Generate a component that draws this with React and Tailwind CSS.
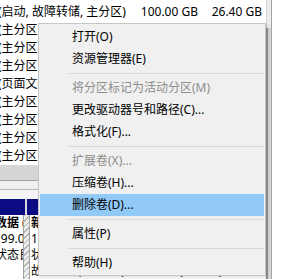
const menuItems = [
  { label: "打开(O)" },
  { label: "资源管理器(E)" },
  { sep: true },
  { label: "将分区标记为活动分区(M)", disabled: true },
  { label: "更改驱动器号和路径(C)..." },
  { label: "格式化(F)..." },
  { sep: true },
  { label: "扩展卷(X)...", disabled: true },
  { label: "压缩卷(H)..." },
  { label: "删除卷(D)...", active: true },
  { sep: true },
  { label: "属性(P)" },
  { sep: true },
  { label: "帮助(H)" },
];

const listRows = [
  "(主分区)",
  "(主分区)",
  "(主分区)",
  "(页面文件, 主分区)",
  "(主分区)",
  "(主分区)",
  "(主分区)",
  "(主分区)",
];

function ContextMenu() {
  return (
    <div className="absolute left-[38px] top-[23px] w-[228px] bg-[#f0f0f0] border border-[#c6c6c6] px-px pt-[2px] pb-px shadow-[2px_2px_3px_rgba(0,0,0,0.12)]">
      {menuItems.map((item, i) =>
        item.sep ? (
          <div key={i} className="h-[7px] flex items-center pl-[28px]">
            <div className="h-px flex-1 bg-[#d7d7d7]" />
          </div>
        ) : (
          <div
            key={i}
            className={`h-[22px] flex items-center pl-[32px] whitespace-nowrap ${
              item.active ? "bg-[#91c9f7]" : ""
            } ${item.disabled ? "text-[#8d8d8d]" : "text-black"}`}
          >
            {item.label}
          </div>
        )
      )}
    </div>
  );
}

export default function App() {
  return (
    <div className="relative w-[306px] h-[279px] overflow-hidden bg-white text-[12px] text-black font-['Noto_Sans','Noto_Sans_CJK_SC',sans-serif]">
      <div className="flex h-full">
        {/* volume list + disk map */}
        <div className="w-[266px] flex flex-col overflow-hidden">
          <div className="h-[171px] pt-[3px] bg-white">
            <div className="h-[18px] leading-[18px] flex whitespace-nowrap">
              <span className="-ml-[2px] w-[140px] shrink-0">(启动, 故障转储, 主分区)</span>
              <span className="w-[60px] shrink-0 text-right">100.00 GB</span>
              <span className="w-[64px] shrink-0 text-right">26.40 GB</span>
            </div>
            {listRows.map((r, i) => (
              <div key={i} className="h-[18px] leading-[18px] whitespace-nowrap -ml-[2px]">
                {r}
              </div>
            ))}
          </div>

          <div className="h-[17px] bg-[#d6d6d6] border-b border-[#a2a2a2]" />
          <div className="h-[9px] bg-[#f0f0f0] border-b border-[#b8b8b8]" />
          <div className="h-[10px] bg-[#f4f4f4]" />

          <div className="h-[17px] flex">
            <div className="w-[25px] bg-[#0b0b84]" />
            <div className="w-[2px] bg-[#d8d8d8]" />
            <div className="flex-1 bg-[#0b0b84]" />
          </div>

          <div className="flex-1 flex leading-[16px] whitespace-nowrap">
            <div className="w-[23px] overflow-hidden bg-white">
              <div className="-ml-[5px] font-bold">数据 (D:)</div>
              <div className="-ml-[6px]">199.00 GB NTFS</div>
              <div className="-ml-[5px]">状态良好 (主分区)</div>
            </div>
            <div className="w-[7px] bg-[repeating-linear-gradient(135deg,#b0b0b0_0_1px,#ececec_1px_4px)] border-l border-r border-[#a0a0a0]" />
            <div className="flex-1 overflow-hidden bg-white pl-px">
              <div className="font-bold">新加卷 (F:)</div>
              <div>100.00 GB NTFS</div>
              <div>状态良好 (启动, 页面文件,</div>
              <div>故障转储, 主分区)    状态良好 (主分区)</div>
            </div>
          </div>
        </div>

        {/* scrollbar */}
        <div className="w-[6px] flex flex-col border-r border-[#a3a3a3]">
          <div className="h-[28px] bg-[#ededed] border-l border-[#d2d2d2]" />
          <div className="flex-1 bg-[#d8d8d8] border-l-2 border-[#939393]" />
        </div>

        <div className="flex-1 bg-white" />
      </div>

      <ContextMenu />
    </div>
  );
}
